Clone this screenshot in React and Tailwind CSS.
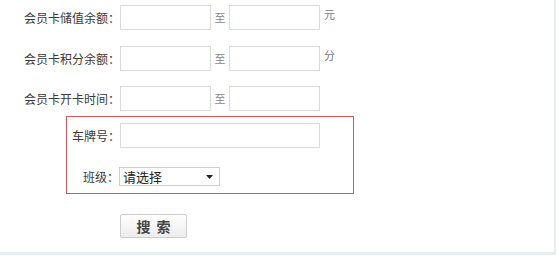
const font = { fontFamily: '"Noto Sans CJK SC", "Liberation Sans", sans-serif' };

const RangeRow = ({ label, unit, className }) => (
  <div className={`flex items-start ${className}`}>
    <label className="w-[118px] h-[25px] flex items-center justify-end text-[12px] text-[#3a3a3a]">{label}</label>
    <input type="text" className="w-[91px] h-[25px] border border-[#dadada] bg-white outline-none" />
    <span className="w-[18px] h-[25px] flex items-center justify-center text-[11px] text-[#888]">至</span>
    <input type="text" className="w-[91px] h-[25px] border border-[#dadada] bg-white outline-none" />
    <span className="ml-[4px] mt-[4px] text-[11px] leading-[11px] text-[#777]">{unit}</span>
  </div>
);

const App = () => {
  return (
    <div className="w-[558px] h-[258px] bg-white" style={font}>
      <div className="w-[556px] h-[255px] border-r-2 border-b-[3px] border-[#e8ecf3] pt-[5px] pl-[2px]">
        <RangeRow label="会员卡储值余额：" unit="元" />
        <RangeRow label="会员卡积分余额：" unit="分" className="mt-[16px]" />
        <RangeRow label="会员卡开卡时间：" unit="" className="mt-[15px]" />

        <div className="ml-[64px] mt-[5px] w-[288px] h-[78px] border border-[#d9535a] pt-[6px]">
          <div className="flex items-center">
            <label className="w-[53px] text-right text-[12px] text-[#3a3a3a]">车牌号：</label>
            <input type="text" className="w-[200px] h-[25px] border border-[#dadada] bg-white outline-none" />
          </div>
          <div className="flex items-center mt-[19px] h-[19px]">
            <label className="w-[52px] text-right text-[12px] leading-[19px] text-[#3a3a3a]">班级：</label>
            <div className="w-[101px] h-[19px] border border-[#cfcfcf] bg-white flex items-center justify-between pl-[3px] pr-[6px]">
              <span className="text-[13px] leading-[17px] text-[#222]">请选择</span>
              <svg width="7" height="4" viewBox="0 0 7 4">
                <path d="M0 0h7L3.5 4z" fill="#222" />
              </svg>
            </div>
          </div>
        </div>

        <button
          type="button"
          className="ml-[118px] mt-[20px] w-[67px] h-[24px] rounded-[2px] border border-[#cdcdcd] bg-gradient-to-b from-white to-[#ececec] text-[14px] font-bold text-[#444] tracking-[6px] pl-[6px]"
        >
          搜索
        </button>
      </div>
    </div>
  );
};

export default App;
